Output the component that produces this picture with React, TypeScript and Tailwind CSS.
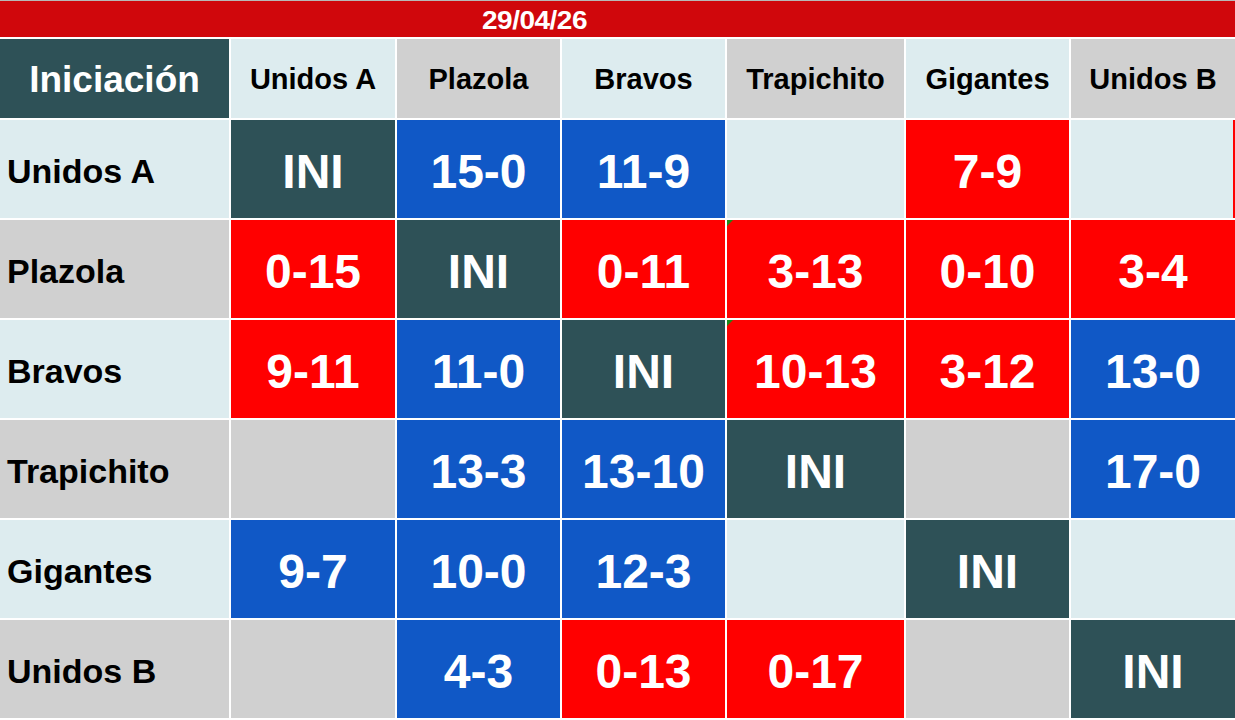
import React from "react";

type Cell = { v: string; c: "ini" | "win" | "loss" | "none" };

const teams = ["Unidos A", "Plazola", "Bravos", "Trapichito", "Gigantes", "Unidos B"];

const rows: Cell[][] = [
  [{ v: "INI", c: "ini" }, { v: "15-0", c: "win" }, { v: "11-9", c: "win" }, { v: "", c: "none" }, { v: "7-9", c: "loss" }, { v: "", c: "none" }],
  [{ v: "0-15", c: "loss" }, { v: "INI", c: "ini" }, { v: "0-11", c: "loss" }, { v: "3-13", c: "loss" }, { v: "0-10", c: "loss" }, { v: "3-4", c: "loss" }],
  [{ v: "9-11", c: "loss" }, { v: "11-0", c: "win" }, { v: "INI", c: "ini" }, { v: "10-13", c: "loss" }, { v: "3-12", c: "loss" }, { v: "13-0", c: "win" }],
  [{ v: "", c: "none" }, { v: "13-3", c: "win" }, { v: "13-10", c: "win" }, { v: "INI", c: "ini" }, { v: "", c: "none" }, { v: "17-0", c: "win" }],
  [{ v: "9-7", c: "win" }, { v: "10-0", c: "win" }, { v: "12-3", c: "win" }, { v: "", c: "none" }, { v: "INI", c: "ini" }, { v: "", c: "none" }],
  [{ v: "", c: "none" }, { v: "4-3", c: "win" }, { v: "0-13", c: "loss" }, { v: "0-17", c: "loss" }, { v: "", c: "none" }, { v: "INI", c: "ini" }],
];

const shade = (i: number) => (i % 2 === 0 ? "bg-[#ddecef]" : "bg-[#d0d0d0]");

const cellBg = (c: Cell["c"], row: number) =>
  c === "ini" ? "bg-[#2e5157]" : c === "win" ? "bg-[#1058c6]" : c === "loss" ? "bg-[#ff0000]" : shade(row);

const App: React.FC = () => {
  return (
    <div className="w-[1235px] h-[720px] bg-white overflow-hidden font-['Liberation_Sans',Arial,sans-serif]">
      {/* ── Title bar ── */}
      <div className="h-[37px] bg-[#d0070c] border-t border-[#b8b8b8] flex">
        <div className="w-[1069px] flex items-center justify-center pt-[3px] text-white font-bold text-[28px] tracking-[-0.5px] leading-none scale-y-[0.95]">
          29/04/26
        </div>
      </div>

      {/* ── Table ── */}
      <div className="mt-[2px] grid grid-cols-[229px_164px_163px_163px_177px_163px_164px] grid-rows-[79px_repeat(6,98px)] gap-[2px]">
        <div className="bg-[#2e5157] flex items-center justify-center pt-[3px] text-white font-bold text-[37px]">
          Iniciación
        </div>
        {teams.map((t, i) => (
          <div key={t} className={`${shade(i)} flex items-center justify-center pt-[3px] text-black font-bold text-[29px]`}>
            {t}
          </div>
        ))}

        {rows.map((row, r) => (
          <React.Fragment key={teams[r]}>
            <div className={`${shade(r)} flex items-center pl-[7px] pt-[5px] text-black font-bold text-[34px]`}>
              {teams[r]}
            </div>
            {row.map((cell, c) => (
              <div
                key={c}
                className={`${cellBg(cell.c, r)} relative flex items-center justify-center pt-[5px] text-white font-bold text-[48px] leading-none`}
              >
                {cell.v}
                {c === 3 && (r === 1 || r === 2) && (
                  <span className="absolute left-0 top-0 w-0 h-0 border-t-[6px] border-r-[6px] border-t-[#1a8a1a] border-r-transparent" />
                )}
                {r === 0 && c === 5 && <span className="absolute right-0 top-0 bottom-0 w-[2px] bg-[#ff0000]" />}
              </div>
            ))}
          </React.Fragment>
        ))}
      </div>
    </div>
  );
};

export default App;
